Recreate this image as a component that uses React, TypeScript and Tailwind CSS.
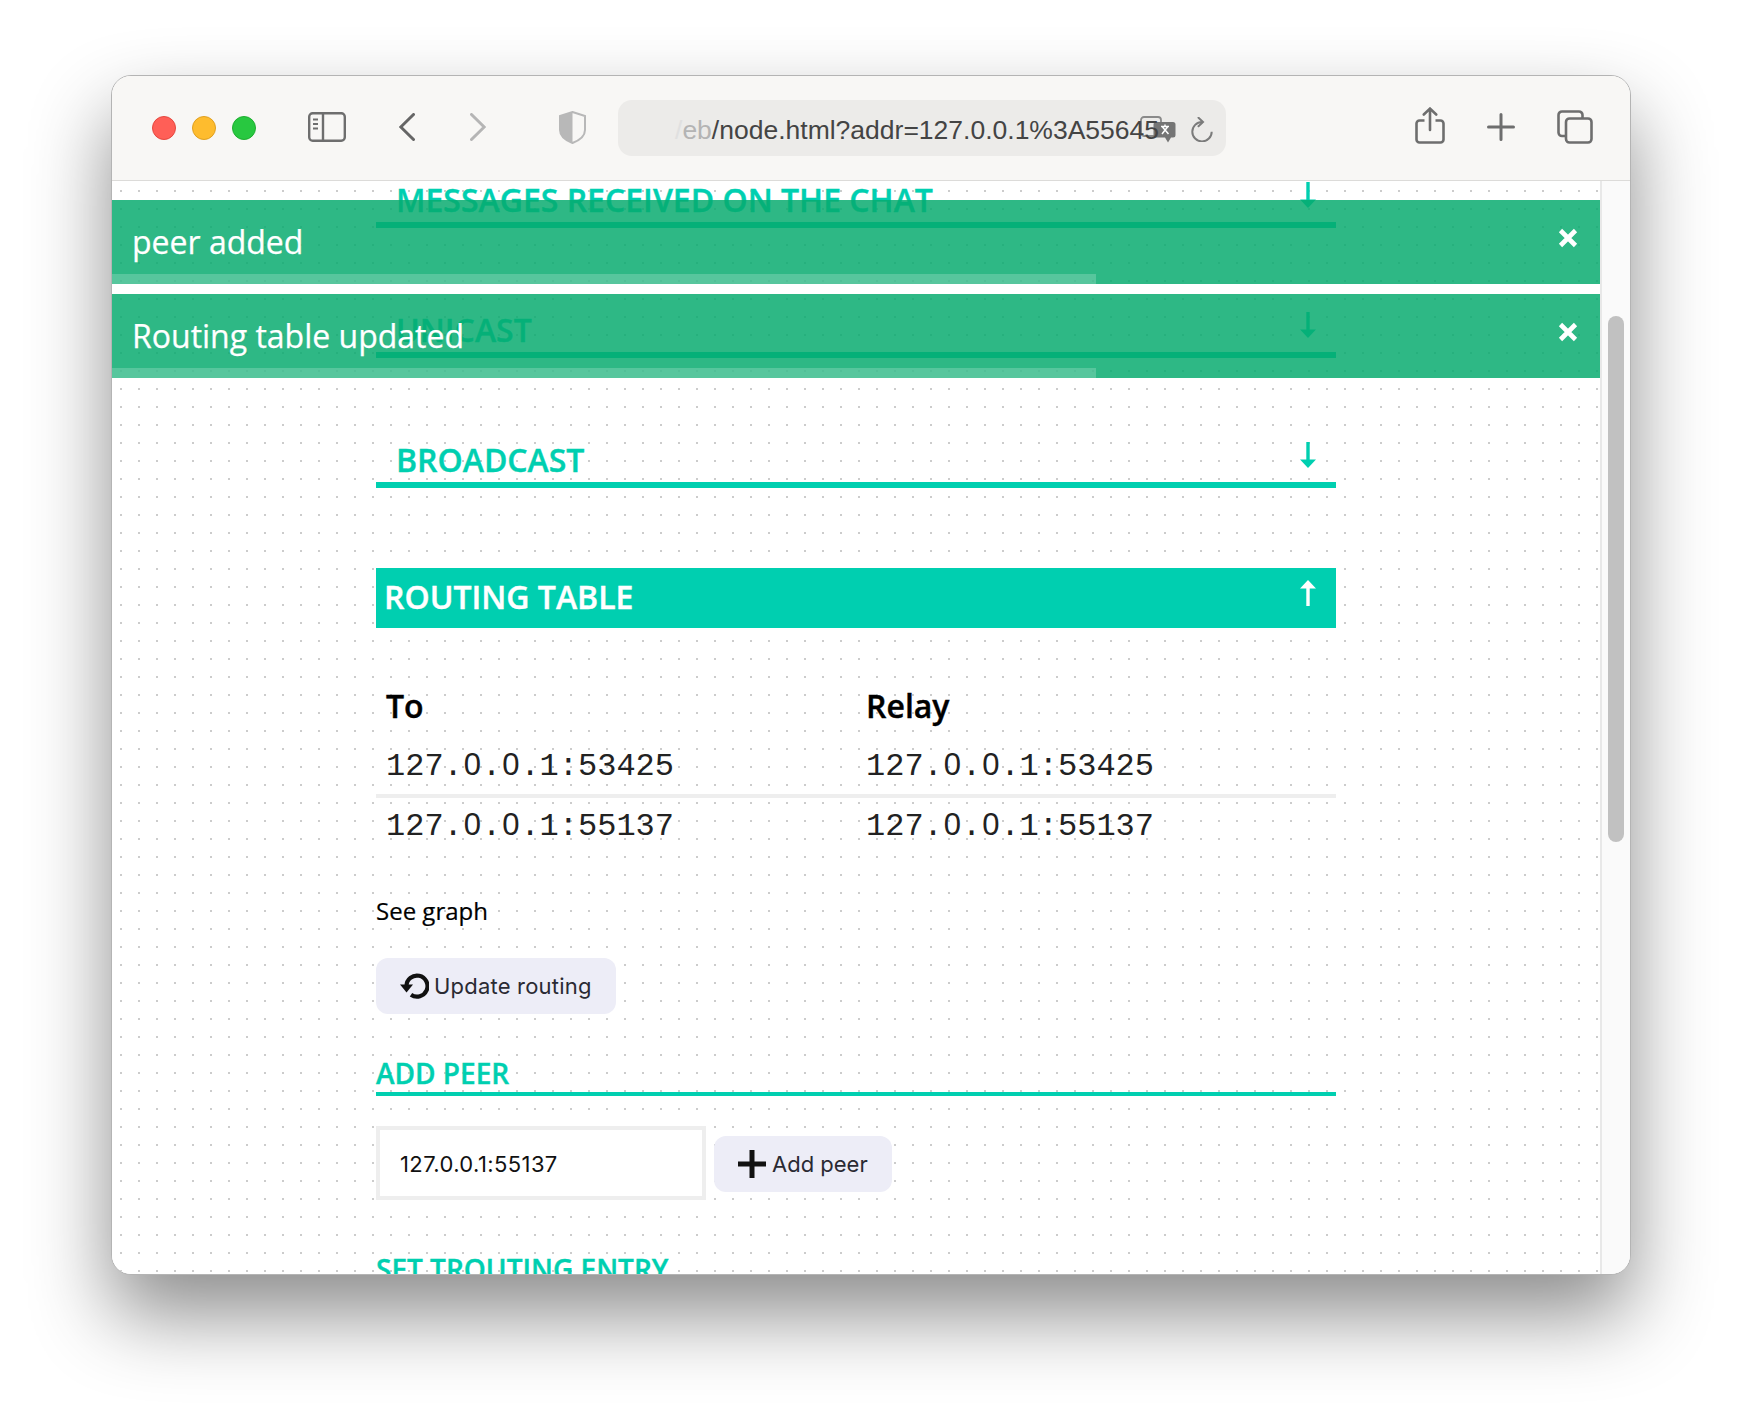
const openSans = "font-['Open_Sans',sans-serif]"

function ArrowDown({ className }: { className: string }) {
  return (
    <svg width="16" height="26" viewBox="0 0 16 26" className={className} fill="currentColor">
      <rect x="6.3" y="0" width="3.4" height="18" />
      <path d="M0 17.5 L16 17.5 L8 26 Z" />
    </svg>
  )
}

function ArrowUp({ className }: { className: string }) {
  return (
    <svg width="16" height="26" viewBox="0 0 16 26" className={className} fill="currentColor">
      <rect x="6.3" y="8" width="3.4" height="18" />
      <path d="M0 8.5 L16 8.5 L8 0 Z" />
    </svg>
  )
}

function SectionHeader({ title, last }: { title: string; last?: boolean }) {
  return (
    <div className={`flex h-[60px] items-start justify-between border-b-[6px] border-[#00cfb0] pl-[20px] pr-[20px] pt-[10px] ${last ? 'mb-[80px]' : 'mb-[70px]'}`}>
      <span className={`${openSans} text-[32px] leading-[44px] font-semibold whitespace-nowrap text-[#00cfb0] [-webkit-text-stroke:0.4px_#00cfb0]`}>{title}</span>
      <ArrowDown className="mt-[4px] text-[#00cfb0]" />
    </div>
  )
}

function Toast({ text }: { text: string }) {
  return (
    <div className="relative h-[84px] bg-[rgba(6,170,110,0.84)]">
      <div className={`${openSans} pl-[20px] pt-[20px] text-[32px] leading-[44px] text-white [-webkit-text-stroke:0.25px_#fff]`}>{text}</div>
      <svg width="20" height="20" viewBox="0 0 20 20" className="absolute right-[22px] top-[28px] text-white" fill="none" stroke="currentColor" strokeWidth="4.6">
        <path d="M2.5 2.5 L17.5 17.5 M17.5 2.5 L2.5 17.5" />
      </svg>
      <div className="absolute bottom-0 left-0 h-[10px] w-[984px] bg-white/20" />
    </div>
  )
}

function Toolbar() {
  return (
    <div className="flex h-[105px] shrink-0 items-start border-b border-[#dcdbd9] bg-[#f8f7f5]">
      {/* traffic lights */}
      <div className="ml-[40px] mt-[40px] flex gap-[16px]">
        <div className="h-[24px] w-[24px] rounded-full border border-[#e5483f] bg-[#ff5f57]" />
        <div className="h-[24px] w-[24px] rounded-full border border-[#e0a020] bg-[#febc2e]" />
        <div className="h-[24px] w-[24px] rounded-full border border-[#1fae30] bg-[#28c840]" />
      </div>

      {/* sidebar */}
      <svg width="38" height="30" viewBox="0 0 38 30" className="ml-[52px] mt-[36px]" fill="none" stroke="#6e6e6e" strokeWidth="2.4">
        <rect x="1.2" y="1.2" width="35.6" height="27.6" rx="3.5" />
        <path d="M15 1.2 V28.8" />
        <path d="M5 7.5 H10 M5 12 H10 M5 16.5 H10" strokeWidth="2" />
      </svg>

      {/* back / forward */}
      <svg width="16" height="28" viewBox="0 0 16 28" className="ml-[53px] mt-[37px]" fill="none" stroke="#666" strokeWidth="3" strokeLinecap="round">
        <path d="M14.5 1.5 L1.8 14 L14.5 26.5" />
      </svg>
      <svg width="16" height="28" viewBox="0 0 16 28" className="ml-[55px] mt-[37px]" fill="none" stroke="#b5b5b5" strokeWidth="3" strokeLinecap="round">
        <path d="M1.5 1.5 L14.2 14 L1.5 26.5" />
      </svg>

      {/* shield */}
      <svg width="27" height="33" viewBox="0 0 27 33" className="ml-[73px] mt-[35px]">
        <path d="M13.5 1 L26 5 V19 C26 25 20 29.5 13.5 32 C7 29.5 1 25 1 19 V5 Z" fill="none" stroke="#b8b8b8" strokeWidth="2" />
        <path d="M13.5 1 L1 5 V19 C1 25 7 29.5 13.5 32 Z" fill="#b8b8b8" />
      </svg>

      {/* address bar */}
      <div className="relative ml-[32px] mt-[24px] flex h-[56px] w-[608px] items-center overflow-hidden rounded-[14px] bg-[#ecebe9]">
        {/* translate */}
        <svg width="36" height="27" viewBox="0 0 36 27" className="absolute left-[522px] top-[16px]">
          <rect x="1" y="1" width="20" height="19" rx="3" fill="none" stroke="#8a8a8a" strokeWidth="1.8" />
          <path d="M16 6 H33 a2.5 2.5 0 0 1 2.5 2.5 V19 a2.5 2.5 0 0 1 -2.5 2.5 H31 L28 26.5 L25 21.5 H16 a2.5 2.5 0 0 1 -2.5 -2.5 V8.5 A2.5 2.5 0 0 1 16 6 Z" fill="#757575" />
          <path d="M21 10.5 H29 M25 8.5 V10.5 M27.5 11 L22 18 M22.5 11 L28.5 18" stroke="#fff" strokeWidth="1.5" fill="none" />
        </svg>
        <div className="relative ml-[57px] mt-[5px] whitespace-nowrap font-['Liberation_Sans',sans-serif] text-[26.5px] text-[#444]">
          <span className="text-[#e0e0e0]">/</span>
          <span className="text-[#b4b4b4]">eb</span>/node.html?addr=127.0.0.1%3A55645
        </div>
        {/* reload */}
        <svg width="22" height="25" viewBox="0 0 22 25" className="absolute left-[573px] top-[17px]" fill="none" stroke="#7b7b7b" strokeWidth="2">
          <path d="M11 5 A9.7 9.7 0 1 0 20.7 14.7" />
          <path d="M7.5 0.8 L12 5 L7.5 9.2" strokeLinecap="round" />
        </svg>
      </div>

      {/* share */}
      <svg width="30" height="37" viewBox="0 0 30 37" className="ml-[189px] mt-[31px]" fill="none" stroke="#6e6e6e" strokeWidth="2.6">
        <path d="M9.5 13.5 H4.5 a3 3 0 0 0 -3 3 V32.5 a3 3 0 0 0 3 3 H25.5 a3 3 0 0 0 3 -3 V16.5 a3 3 0 0 0 -3 -3 H20.5" />
        <path d="M15 23 V2 M8.8 7.5 L15 1.6 L21.2 7.5" strokeLinecap="round" />
      </svg>

      {/* new tab */}
      <svg width="28" height="28" viewBox="0 0 28 28" className="ml-[42px] mt-[37px]" fill="none" stroke="#6e6e6e" strokeWidth="3" strokeLinecap="round">
        <path d="M14 1.5 V26.5 M1.5 14 H26.5" />
      </svg>

      {/* tabs */}
      <svg width="36" height="34" viewBox="0 0 36 34" className="ml-[42px] mt-[34px]" fill="none" stroke="#6e6e6e" strokeWidth="2.6">
        <path d="M8 26 H5 a3.5 3.5 0 0 1 -3.5 -3.5 V5 A3.5 3.5 0 0 1 5 1.5 H22 A3.5 3.5 0 0 1 25.5 5 V8" />
        <rect x="9" y="8.5" width="25.5" height="24" rx="3.5" />
      </svg>
    </div>
  )
}

// Liberation Mono dots its zeros, the reference doesn't
function Addr({ value }: { value: string }) {
  return (
    <div>
      {value.split('').map((c, i) =>
        c === '0' ? (
          <span key={i} className="inline-block w-[19.2px] text-center font-['Liberation_Sans',sans-serif] text-[31px] font-normal">0</span>
        ) : (
          <span key={i}>{c}</span>
        ),
      )}
    </div>
  )
}

function RoutingRow({ to, relay }: { to: string; relay: string }) {
  return (
    <div className="grid h-[56px] grid-cols-[480px_1fr] pl-[10px] font-['Liberation_Mono',monospace] text-[32px] leading-[54px] text-[#222]">
      <Addr value={to} />
      <Addr value={relay} />
    </div>
  )
}

function Page() {
  return (
    <div className="-mt-[13px] ml-[264px] w-[960px]">
      <SectionHeader title="MESSAGES RECEIVED ON THE CHAT" />
      <SectionHeader title="UNICAST" />
      <SectionHeader title="BROADCAST" last />

      {/* Routing table */}
      <div className="flex h-[60px] items-start justify-between bg-[#00cfb0] pl-[8px] pr-[20px] pt-[7px]">
        <span className={`${openSans} text-[32px] leading-[44px] font-semibold text-white [-webkit-text-stroke:0.4px_#fff]`}>ROUTING TABLE</span>
        <ArrowUp className="mt-[5px] text-white" />
      </div>

      <div className={`${openSans} mt-[56px] grid h-[54px] grid-cols-[480px_1fr] pl-[10px] text-[32px] leading-[44px] font-semibold text-black [-webkit-text-stroke:0.4px_#000]`}>
        <div>To</div>
        <div>Relay</div>
      </div>
      <RoutingRow to="127.0.0.1:53425" relay="127.0.0.1:53425" />
      <div className="h-[4px] bg-[#eeeeee]" />
      <RoutingRow to="127.0.0.1:55137" relay="127.0.0.1:55137" />

      <div className={`${openSans} mt-[41px] text-[24px] leading-[32px] text-black [-webkit-text-stroke:0.2px_#000]`}>See graph</div>

      <button className="mt-[31px] flex h-[56px] w-[240px] items-center rounded-[12px] bg-[#ededf7] pl-[24px] font-['Inter',sans-serif] text-[22px] tracking-[0.2px] text-[#2a2a33]">
        <svg width="29" height="26" viewBox="0 0 29 26" className="mr-[5px]" fill="none">
          <path d="M6.5 13 A10.5 10.5 0 1 1 11 21.7" stroke="#111" strokeWidth="4.2" />
          <path d="M0 11.5 H13 L6.5 19.5 Z" fill="#111" />
        </svg>
        Update routing
      </button>

      <div className={`${openSans} mt-[40px] h-[42px] border-b-[4px] border-[#00cfb0] text-[28px] leading-[38px] font-semibold text-[#00cfb0] [-webkit-text-stroke:0.4px_#00cfb0]`}>ADD PEER</div>

      <div className="mt-[30px] flex items-start gap-[8px]">
        <div className="flex h-[74px] w-[330px] items-center border-[4px] border-[#eeeeee] bg-white pl-[20px] pt-[2px] font-['Inter',sans-serif] text-[22px] tracking-[0.4px] text-[#111]">
          127.0.0.1:55137
        </div>
        <button className="mt-[10px] flex h-[56px] w-[178px] items-center rounded-[12px] bg-[#ededf7] pl-[24px] font-['Inter',sans-serif] text-[22px] text-[#2a2a33]">
          <svg width="28" height="28" viewBox="0 0 28 28" className="mr-[6px]" fill="#111">
            <rect x="11.5" y="0" width="5" height="28" />
            <rect x="0" y="11.5" width="28" height="5" />
          </svg>
          Add peer
        </button>
      </div>

      <div className={`${openSans} mt-[50px] text-[28px] leading-[38px] font-semibold text-[#00cfb0] [-webkit-text-stroke:0.4px_#00cfb0]`}>SET TROUTING ENTRY</div>
    </div>
  )
}

export default function App() {
  return (
    <div className="h-[1422px] w-[1742px] overflow-hidden bg-white pl-[111px] pt-[75px]">
      <div className="flex h-[1200px] w-[1520px] flex-col overflow-hidden rounded-[20px] border border-[#b4b4b4] bg-white shadow-[0_40px_80px_rgba(0,0,0,0.45)]">
        <Toolbar />
        <div className="flex min-h-0 flex-1">
          <div className="relative min-w-0 flex-1 overflow-hidden bg-white bg-[radial-gradient(circle,#cccccc_1px,transparent_1px)] bg-[length:18px_18px] bg-[position:0_1px]">
            <Page />
            {/* toast stack sits over the page */}
            <div className="absolute inset-x-0 top-[19px]">
              <Toast text="peer added" />
              <div className="h-[10px] bg-white" />
              <Toast text="Routing table updated" />
            </div>
          </div>
          {/* scrollbar */}
          <div className="w-[30px] shrink-0 border-l-2 border-[#e8e8e8] bg-[#fafafa] pl-[6px] pt-[135px]">
            <div className="h-[526px] w-[16px] rounded-[8px] bg-[#c1c1c1]" />
          </div>
        </div>
      </div>
    </div>
  )
}
